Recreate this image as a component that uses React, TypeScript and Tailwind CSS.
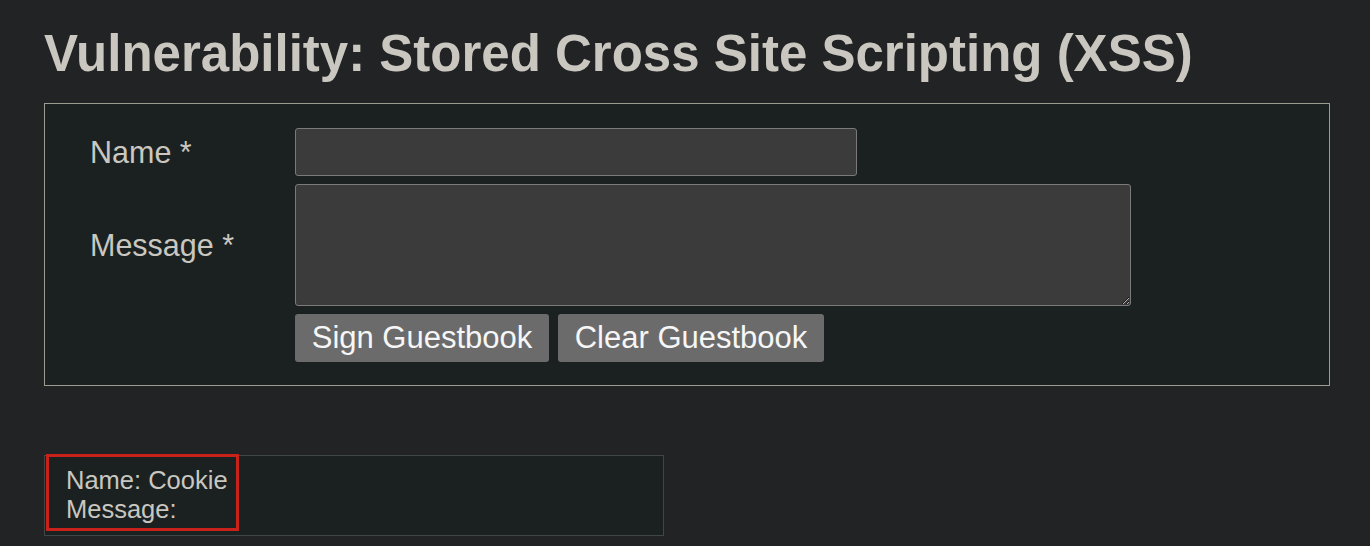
import React from "react";

export default function App() {
  return (
    <div className="min-h-screen bg-[#222324] font-['Liberation_Sans',Arial,sans-serif] text-[#c9c7c0]">
      <div className="pl-[44px] pt-[28px] pb-[10px]">
        <h1 className="text-[51px] font-bold leading-[51px] text-[#c9c7c0] whitespace-nowrap">
          Vulnerability: Stored Cross Site Scripting (XSS)
        </h1>

        <div className="mt-[24px] w-[1286px] h-[283px] border border-[#9a9c92] bg-[#1b2120] pt-[24px]">
          <div className="flex items-center">
            <div className="w-[250px] pl-[45px] text-[30.5px] leading-[34px]">Name *</div>
            <input
              type="text"
              className="w-[562px] h-[48px] rounded-[3px] border border-[#7a7a7a] bg-[#3b3b3b] outline-none"
            />
          </div>
          <div className="flex items-center mt-[8px]">
            <div className="w-[250px] pl-[45px] text-[30.5px] leading-[34px]">Message *</div>
            <textarea className="w-[836px] h-[122px] rounded-[3px] border border-[#7a7a7a] bg-[#3b3b3b] outline-none resize [color-scheme:dark]" />
          </div>
          <div className="flex mt-[8px] pl-[250px] gap-[9px]">
            <button className="w-[254px] h-[48px] rounded-[3px] bg-[#6b6b6b] text-[31px] leading-[48px] text-[#f6f6f6] text-center">
              Sign Guestbook
            </button>
            <button className="w-[266px] h-[48px] rounded-[3px] bg-[#6b6b6b] text-[31px] leading-[48px] text-[#f6f6f6] text-center">
              Clear Guestbook
            </button>
          </div>
        </div>

        <div className="relative mt-[69px] w-[620px] h-[81px] border border-[#3f4646] bg-[#1b2120] pl-[21px] pt-[10px] text-[25.5px] leading-[28.5px]">
          <div>Name: Cookie</div>
          <div>Message:</div>
          <div className="absolute left-[1px] top-[-2px] w-[193px] h-[77px] border-[3px] border-[#c9221a]" />
        </div>
      </div>
    </div>
  );
}
